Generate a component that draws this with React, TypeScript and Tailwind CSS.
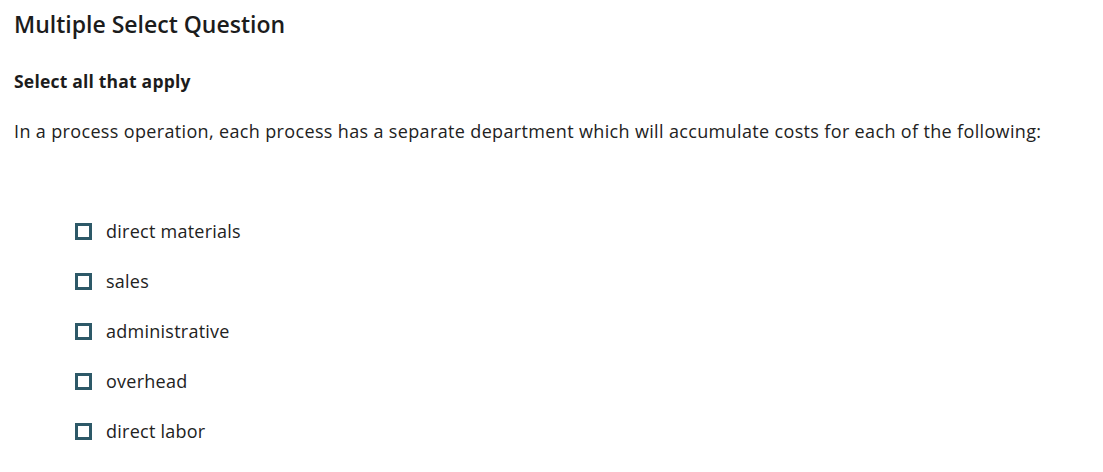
import React from "react";

const options = [
  "direct materials",
  "sales",
  "administrative",
  "overhead",
  "direct labor",
];

const App = () => {
  return (
    <div
      className="w-full bg-white px-[14px] pt-[8px] text-[#1a1a1a]"
      style={{ fontFamily: "'Open Sans', Lato, sans-serif" }}
    >
      <h1 className="text-[23px] font-semibold leading-[32px] text-[#1c1c1c]">
        Multiple Select Question
      </h1>
      <h2 className="mt-[29px] text-[17.5px] font-bold leading-[24px] tracking-[0.2px] text-[#1c1c1c]">
        Select all that apply
      </h2>
      <p className="mt-[26px] text-[18px] leading-[24px] tracking-[0.35px] text-[#222]">
        In a process operation, each process has a separate department which will accumulate costs for each of the
        following:
      </p>
      <div className="mt-[76px] flex flex-col gap-[26px] pl-[61px]">
        {options.map((opt) => (
          <label key={opt} className="flex items-center gap-[14px] h-[24px]">
            <span className="w-[17px] h-[17px] border-[3px] border-[#2d5968] bg-white shrink-0" />
            <span className="text-[18px] leading-[24px] tracking-[0.25px] text-[#222]">{opt}</span>
          </label>
        ))}
      </div>
    </div>
  );
};

export default App;
